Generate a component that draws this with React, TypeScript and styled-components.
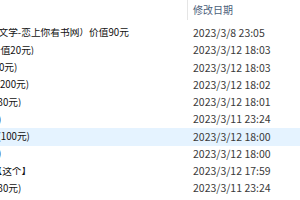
import styled, { createGlobalStyle } from "styled-components";

type FileRow = {
    name: string;
    shift: number;
    modified: string;
    active?: boolean;
}

// names are scrolled to the left, shift = how far the visible text is pushed off the edge
const rows: FileRow[] = [
    { name: "文学-恋上你看书网）价值90元", shift: -1.5, modified: "2023/3/8 23:05" },
    { name: "价值20元)", shift: -9, modified: "2023/3/12 18:03" },
    { name: "90元)", shift: -6.5, modified: "2023/3/12 18:03" },
    { name: "(200元)", shift: -3.3, modified: "2023/3/12 18:02" },
    { name: "30元)", shift: -2.5, modified: "2023/3/12 18:01" },
    { name: ")", shift: -2, modified: "2023/3/11 23:24" },
    { name: "(100元)", shift: -2.5, modified: "2023/3/12 18:00", active: true },
    { name: ")", shift: -2, modified: "2023/3/12 18:00" },
    { name: "【这个】", shift: -7.5, modified: "2023/3/12 17:59" },
    { name: "30元)", shift: -2.5, modified: "2023/3/11 23:24" },
]

const GlobalStyle = createGlobalStyle`
    html, body {
        margin: 0;
        padding: 0;
        background: #ffffff;
        overflow: hidden;
    }
    body {
        font-family: "Noto Sans CJK SC", "Liberation Sans", sans-serif;
    }
`

const Pane = styled.div`
    width: 300px;
    height: 200px;
    overflow: hidden;
    background: #ffffff;
`

const Header = styled.div`
    display: grid;
    grid-template-columns: 187px 1px 1fr;
    align-items: center;
    height: 20px;
    margin-bottom: 4.67px;
`

const Divider = styled.div`
    width: 1px;
    height: 20px;
    background: #e5e5e5;
`

const HeaderLabel = styled.div`
    padding-left: 5px;
    font-size: 10px;
    line-height: 1;
    color: #4c607a;
`

const Row = styled.div<{ $active?: boolean }>`
    display: grid;
    grid-template-columns: 188px 1fr;
    align-items: center;
    height: 17.27px;
    background: ${(p) => (p.$active ? "#e5f3ff" : "transparent")};
`

const NameCell = styled.div`
    overflow: hidden;
    white-space: nowrap;
    font-size: 9.7px;
    line-height: 1;
    color: #111111;
`

const NameText = styled.span<{ $shift: number }>`
    display: inline-block;
    margin-left: ${(p) => p.$shift}px;
`

const DateCell = styled.div`
    padding-left: 5px;
    white-space: nowrap;
    font-size: 10.5px;
    line-height: 1;
    color: #3a3a3a;
`

export default function App() {
    return (
        <>
            <GlobalStyle />
            <Pane>
                <Header>
                    <div />
                    <Divider />
                    <HeaderLabel>修改日期</HeaderLabel>
                </Header>
                {rows.map((r, i) => (
                    <Row key={i} $active={r.active}>
                        <NameCell>
                            <NameText $shift={r.shift}>{r.name}</NameText>
                        </NameCell>
                        <DateCell>{r.modified}</DateCell>
                    </Row>
                ))}
            </Pane>
        </>
    )
}
